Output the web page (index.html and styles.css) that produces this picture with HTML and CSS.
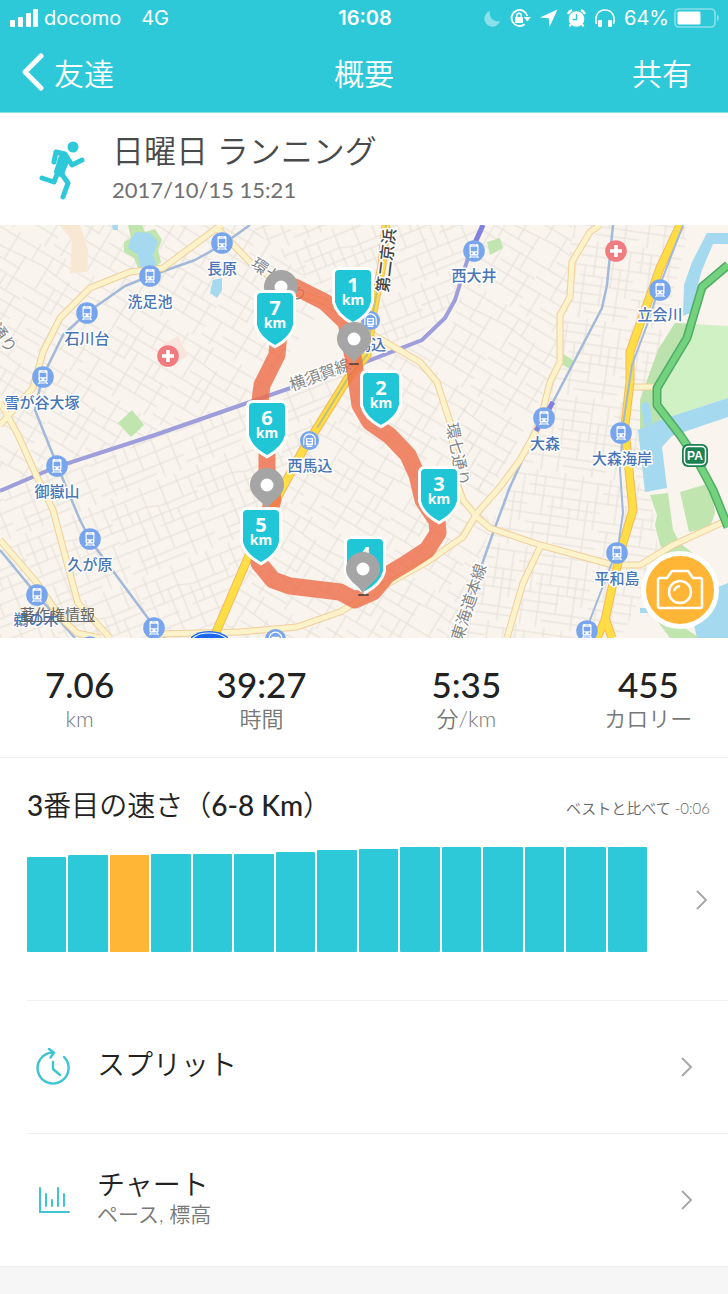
FILE: index.html
```
<!DOCTYPE html>
<html lang="ja">
<head>
  <meta charset="utf-8">
  <meta name="viewport" content="width=device-width, initial-scale=1">
  <title>概要</title>
  <link rel="stylesheet" href="styles.css">
</head>
<body>
  <header class="top">
    <div class="status">
      <div class="status-left">
        <svg width="29" height="18" viewBox="0 0 29 18" fill="#fff">
          <rect x="0" y="11" width="5" height="7" rx="1"/>
          <rect x="8" y="8" width="5" height="10" rx="1"/>
          <rect x="16" y="4" width="5" height="14" rx="1"/>
          <rect x="23" y="0" width="5" height="18" rx="1"/>
        </svg>
        <span class="carrier">docomo</span>
        <span>4G</span>
      </div>
      <time class="clock">16:08</time>
      <div class="status-right">
        <svg class="moon" width="17" height="17" viewBox="0 0 17 17"><path d="M6 1A8 8 0 1 0 16 11A8 8 0 0 1 6 1Z" fill="#8be0e9"/></svg>
        <svg class="lock" width="21" height="20" viewBox="0 0 21 20">
          <path d="M14.600 16.200A8 8 0 1 1 17.300 8" fill="none" stroke="#fff" stroke-width="1.800"/>
          <path d="M13.800 9H20.800L17.300 13.500Z" fill="#fff"/>
          <rect x="5" y="9" width="8" height="6" rx="1" fill="#fff"/>
          <path d="M6.700 9V7.500A2.300 2.300 0 0 1 11.300 7.500V9" fill="none" stroke="#fff" stroke-width="1.500"/>
        </svg>
        <svg class="arrow" width="18" height="18" viewBox="0 0 18 18"><path d="M17.500 .5L0 8.500L8.800 9.200L9.500 18Z" fill="#fff"/></svg>
        <svg class="alarm" width="19" height="19" viewBox="0 0 19 19">
          <circle cx="9.500" cy="10" r="7.800" fill="#fff"/>
          <path d="M1 5A9 9 0 0 1 5 1M18 5A9 9 0 0 0 14 1" stroke="#fff" stroke-width="2.400" fill="none"/>
          <path d="M4 15L2.500 17.500M15 15L16.500 17.500" stroke="#fff" stroke-width="2"/>
          <path d="M9.500 5V10.500H5.500" stroke="#2dc9d9" stroke-width="1.300" fill="none"/>
        </svg>
        <svg class="phones" width="20" height="19" viewBox="0 0 20 19">
          <path d="M1.500 15C-1 6 4 1 10 1S21 6 18.500 15" fill="none" stroke="#fff" stroke-width="1.600"/>
          <rect x="3" y="11" width="4" height="7" rx="1" fill="#fff"/>
          <rect x="13" y="11" width="4" height="7" rx="1" fill="#fff"/>
        </svg>
        <span>64%</span>
        <svg class="battery" width="46" height="20" viewBox="0 0 46 20">
          <rect x="1" y="1" width="40" height="18" rx="4" fill="none" stroke="#8be0e9" stroke-width="1.600"/>
          <rect x="3.500" y="3.500" width="23" height="13" rx="1.500" fill="#fff"/>
          <path d="M43 6.500Q47 10 43 13.500Z" fill="#8be0e9"/>
        </svg>
      </div>
    </div>
    <nav class="nav">
      <a class="back" href="#">
        <svg width="22" height="38" viewBox="0 0 22 38"><path d="M19 3L3 19L19 35" fill="none" stroke="#fff" stroke-width="5" stroke-linecap="round" stroke-linejoin="round"/></svg>
        友達
      </a>
      <h1>概要</h1>
      <a class="share" href="#">共有</a>
    </nav>
  </header>

  <section class="activity">
    <svg width="47" height="60" viewBox="0 0 47 60" fill="none" stroke="#2dc9d9" stroke-linecap="round" stroke-linejoin="round">
      <circle cx="34" cy="7" r="5.500" fill="#2dc9d9" stroke="none"/>
      <path d="M15 22L17 12L26 14L33 25L43 20" stroke-width="5"/>
      <path d="M23 16L28 19L22 34L18 32Z" fill="#2dc9d9" stroke-width="6"/>
      <path d="M19 32L15 42L3 38" stroke-width="5"/>
      <path d="M22 33L29 43L24 57" stroke-width="5"/>
    </svg>
    <div>
      <h2>日曜日 ランニング</h2>
      <time datetime="2017-10-15T15:21">2017/10/15 15:21</time>
    </div>
  </section>

  <section class="map">
    <svg class="map-svg" viewBox="0 225 728 413">
      <defs>
        <pattern id="streetsA" width="92" height="84" patternUnits="userSpaceOnUse" patternTransform="rotate(-22)">
          <path d="M0 8H92M0 21H38L52 25H92M0 33H92M0 46H30M44 44H92M0 57H92M12 70H92M0 78H60M8 0V46M19 8V33M27 21V84M38 0V57M49 25V70M58 0V44M67 33V84M76 0V25M84 44V84M88 8V33M14 57V84"/>
        </pattern>
        <pattern id="streetsB" width="86" height="94" patternUnits="userSpaceOnUse" patternTransform="rotate(31)">
          <path d="M0 6H86M0 18L40 22L86 18M10 32H70M0 43H86M0 55H34M46 58H86M0 68H86M20 80H86M0 88H40M7 6V43M18 0V20M24 32V68M33 18V55M42 43V94M51 0V32M60 43V80M68 18V58M75 0V18M79 58V94M12 68V94"/>
        </pattern>
        <pattern id="streetsC" width="74" height="78" patternUnits="userSpaceOnUse" patternTransform="rotate(8)">
          <path d="M0 6H74M0 15H50M0 25H74M20 35H74M0 44H74M0 53H45M0 63H74M30 71H74M6 0V25M15 6V44M25 25V78M34 0V35M43 35V63M52 0V44M60 25V78M68 6V53M9 53V78"/>
        </pattern>
        <symbol id="station" viewBox="0 0 22 22">
          <circle cx="11" cy="11" r="10.800" fill="#78a6ee"/>
          <path d="M8 4H14Q15.500 4 15.500 5.500V14Q15.500 15.500 14 15.500H8Q6.500 15.500 6.500 14V5.500Q6.500 4 8 4Z" fill="#fff"/>
          <path d="M8 7H14V11H8ZM9 5H13" fill="#78a6ee" stroke="#78a6ee" stroke-width=".6"/>
          <circle cx="8.700" cy="13.300" r="1" fill="#78a6ee"/><circle cx="13.300" cy="13.300" r="1" fill="#78a6ee"/>
          <path d="M8 15.500L6.500 18M14 15.500L15.500 18M7.500 17H14.500" stroke="#fff" stroke-width="1.200"/>
        </symbol>
        <symbol id="metro" viewBox="0 0 22 22">
          <circle cx="11" cy="11" r="10" fill="#78a6ee"/>
          <path d="M5 16V10A6 6 0 0 1 17 10V16" fill="none" stroke="#fff" stroke-width="1.200"/>
          <path d="M8 9H14V15H8ZM8 17H14" fill="none" stroke="#fff" stroke-width="1.500"/>
          <path d="M8 12H14" stroke="#fff"/>
        </symbol>
        <symbol id="hospital" viewBox="0 0 22 22">
          <circle cx="11" cy="11" r="10.800" fill="#f07c80"/>
          <path d="M11 5V17M5 11H17" stroke="#fff" stroke-width="3.600"/>
        </symbol>
        <path id="flag" d="M-14 2H14Q18 2 18 6V34Q15 46 0 54Q-15 46 -18 34V6Q-18 2 -14 2Z"/>
        <g id="pin">
          <path d="M0 25C-3 16 -17 12 -17 0A17 17 0 0 1 17 0C17 12 3 16 0 25Z" fill="#a5a5a5"/>
          <circle r="6.500" fill="#fff"/>
        </g>
      </defs>

      <rect y="225" width="728" height="413" fill="#f9f4ed"/>

      <!-- small streets -->
      <path d="M0 225H250L330 300L250 402L0 491Z" fill="url(#streetsB)"/>
      <path d="M0 491L250 402L360 364L300 450L247 560L217 638H0Z" fill="url(#streetsA)"/>
      <path d="M250 225H483L445 318L360 364L330 300Z" fill="url(#streetsA)"/>
      <path d="M360 364L450 330L490 528L455 638H217L247 560L300 450Z" fill="url(#streetsB)"/>
      <path d="M483 225H572L570 297L560 362L480 513L450 330Z" fill="url(#streetsB)"/>
      <path d="M572 225H690L640 430L660 560L620 638H455L490 528L560 362Z" fill="url(#streetsC)"/>

      <!-- parks, districts and water -->
      <path d="M60 225H80L88 250L87 272L70 273L72 240Z" fill="#f7e7d3"/>
      <path d="M162 345L178 336L188 356L172 365Z" fill="#fae4de"/>
      <g fill="#c0e5ae">
        <path d="M128 225H142L145 232L155 229L162 240L158 250L161 262L150 272L138 268L134 258L124 252V242L131 238Z"/>
        <path d="M132 410L144 425L131 437L118 423Z"/>
        <path d="M562 353L574 361L570 369L561 364Z"/>
        <path d="M487 242L500 238L503 248L490 255Z"/>
        <path d="M650 495L668 493L673 530L680 543L694 554L670 562L660 545L655 525L657 515Z"/>
        <path d="M680 492L710 483L715 513L710 527L689 532Z"/>
        <path d="M655 618L680 625L700 638H670Z"/>
      </g>
      <path d="M675 323L728 326V398L660 420L640 432V400L658 350Z" fill="#d0f1c3"/>
      <path d="M675 323L693 324L657 390L663 418L640 432V400L658 350Z" fill="#bce2ad"/>
      <g fill="#a4d9f0">
        <path d="M130 240L136 232L150 233L158 242L153 255L158 268L140 270L138 255L128 248Z"/>
        <path d="M213 280L222 278V290L217 298L210 293Z"/>
        <path d="M112 225H118V230H113Z"/>
        <path d="M707 233H728V244H713L702 270L690 313L683 316L684 285L692 262Z"/>
        <path d="M638 430L660 420L728 398V417L672 436L662 447L667 488L645 492Z"/>
        <path d="M641 405Q646 398 650 405L652 422L645 427Z"/>
        <path d="M718 587L728 583V638H697L694 625L710 610Z"/>
        <path d="M640 608H650V613H640Z"/>
      </g>

      <!-- railways -->
      <g fill="none" stroke="#a3b9da" stroke-width="2.500" stroke-linejoin="round">
        <path d="M250 225L222 245L195 260L150 276L125 286L88 312L63 335L42 378L35 410L57 465L80 520L90 540L153 625L165 638"/>
        <path d="M0 550L37 595L75 638"/>
        <path d="M613 225L607 285L602 308L553 402L537 428L510 487L493 533L480 570L468 600L455 638"/>
      </g>
      <path d="M0 491L56 467L155 435L250 402L360 364L422 340L445 318L455 300L468 258L483 225" fill="none" stroke="#9d9edb" stroke-width="4"/>

      <!-- roads: casing first, then the fill -->
      <g fill="none" stroke-linejoin="round">
        <g stroke="#f0cf9c" stroke-width="7">
          <path d="M0 425L33 388L43 352L60 318L90 288L130 272L163 268L217 228L222 225M217 228L250 262L285 288L325 302L373 335L420 362L437 382L450 422L457 483L463 500L477 517L490 528L540 545L613 565H640L673 545L728 520"/>
          <path d="M0 402L18 435L37 477L53 510L67 563L78 603L110 638M0 540L37 583L60 617L77 633L100 638M160 634L240 632L297 627L340 612L380 588L427 562L463 537L477 513L500 487L520 460L533 437L540 422L550 382L560 362V315L570 297L572 262L590 232L600 225M540 547L523 583L507 638M632 387H657"/>
        </g>
        <g stroke="#fdf3cb" stroke-width="5">
          <path d="M0 402L18 435L37 477L53 510L67 563L78 603L110 638M0 540L37 583L60 617L77 633L100 638M160 634L240 632L297 627L340 612L380 588L427 562L463 537L477 513L500 487L520 460L533 437L540 422L550 382L560 362V315L570 297L572 262L590 232L600 225M540 547L523 583L507 638M632 387H657"/>
          <path d="M0 425L33 388L43 352L60 318L90 288L130 272L163 268L217 228L222 225M217 228L250 262L285 288L325 302L373 335L420 362L437 382L450 422L457 483L463 500L477 517L490 528L540 545L613 565H640L673 545L728 520"/>
        </g>
        <g stroke="#f2b95f" stroke-width="9">
          <path d="M680 225L660 268L630 352V382L625 425L627 450L633 510L623 543L613 583L605 620L597 638M605 618L612 638"/>
          <path d="M386 225L382 265L373 312L367 355L350 375L317 428L303 450L283 487L260 530L247 560L217 630L213 638"/>
        </g>
        <g stroke="#ffdd45" stroke-width="7">
          <path d="M680 225L660 268L630 352V382L625 425L627 450L633 510L623 543L613 583L605 620L597 638M605 618L612 638"/>
          <path d="M386 225L382 265L373 312L367 355L350 375L317 428L303 450L283 487L260 530L247 560L217 630L213 638"/>
        </g>
        <path d="M683 225L660 285L647 325L632 365L623 425L620 470L623 513L618 547L590 620L583 638" stroke="#a3b9da" stroke-width="2"/>
        <path d="M386 225L382 265L373 312L367 355L350 375L317 428" stroke="#c3bf83" stroke-width="2"/>
        <path d="M728 265L702 287L687 338L657 388V405L680 435L697 460L713 490L728 527" stroke="#51ab67" stroke-width="9"/>
        <path d="M728 265L702 287L687 338L657 388V405L680 435L697 460L713 490L728 527" stroke="#72d27e" stroke-width="6"/>
      </g>
      <path d="M553 402L549 409M540 424L536 431M474 245L483 225" stroke="#8080e0" stroke-width="5"/>

      <!-- road and line names -->
      <g class="road-name">
        <text x="250" y="266" transform="rotate(36 250 266)">環七通り</text>
        <text x="292" y="391" transform="rotate(-20 292 391)">横須賀線</text>
        <text x="446" y="424" transform="rotate(79 446 424)">環七通り</text>
        <text x="462" y="642" transform="rotate(-72 462 642)">東海道本線</text>
        <text x="-10" y="328" transform="rotate(55 -10 328)">通り</text>
        <text class="route-name" x="388" y="293" transform="rotate(-83 388 293)">第二京浜</text>
      </g>

      <!-- stations -->
      <g>
        <use href="#station" x="211" y="232" width="22" height="22"/>
        <use href="#station" x="139" y="265" width="22" height="22"/>
        <use href="#station" x="76" y="302" width="22" height="22"/>
        <use href="#station" x="32" y="366" width="22" height="22"/>
        <use href="#station" x="46" y="455" width="22" height="22"/>
        <use href="#station" x="79" y="528" width="22" height="22"/>
        <use href="#station" x="26" y="584" width="22" height="22"/>
        <use href="#station" x="143" y="617" width="22" height="22"/>
        <use href="#station" x="79" y="636" width="22" height="22"/>
        <use href="#station" x="463" y="240" width="22" height="22"/>
        <use href="#station" x="649" y="279" width="22" height="22"/>
        <use href="#station" x="533" y="407" width="22" height="22"/>
        <use href="#station" x="610" y="422" width="22" height="22"/>
        <use href="#station" x="606" y="542" width="22" height="22"/>
        <use href="#station" x="576" y="620" width="22" height="22"/>
        <use href="#metro" x="299" y="430" width="21" height="21"/>
        <use href="#metro" x="360" y="310" width="21" height="21"/>
        <use href="#metro" x="264" y="628" width="23" height="23"/>
        <use href="#hospital" x="157" y="345" width="22" height="22"/>
        <use href="#hospital" x="605" y="240" width="22" height="22"/>
      </g>
      <path d="M191 645V637Q197 631 209 631T228 637V645Z" fill="#1b67ee"/>
      <path d="M193 642V638Q198 633 209 633T226 638V642" fill="none" stroke="#fff" stroke-width="1.200"/>
      <g class="station-name">
        <text x="222" y="274">長原</text>
        <text x="150" y="307">洗足池</text>
        <text x="87" y="344">石川台</text>
        <text x="42" y="408">雪が谷大塚</text>
        <text x="57" y="497">御嶽山</text>
        <text x="90" y="570">久が原</text>
        <text x="36" y="625">鵜の木</text>
        <text x="474" y="281">西大井</text>
        <text x="660" y="320">立会川</text>
        <text x="545" y="449">大森</text>
        <text x="622" y="464">大森海岸</text>
        <text x="617" y="584">平和島</text>
        <text x="310" y="471">西馬込</text>
        <text x="371" y="350">馬込</text>
      </g>
      <rect x="682" y="444" width="26" height="23" rx="6" fill="#1c8150"/>
      <rect x="684.500" y="446.500" width="21" height="18" rx="4" fill="none" stroke="#fff" stroke-width="1.500"/>
      <text class="parking" x="695" y="460">PA</text>

      <!-- running track -->
      <path d="M283 287L295 287L325 302L346 322L354 362L357 385L360 405L370 422L390 436L408 455L417 475L423 500L437 521L438 533L427 550L407 563L387 575L373 592L355 600L340 592L290 586L273 580L259 563L262 535L273 500L267 470V440L259 410L262 385L277 355L280 320V290" fill="none" stroke="#ee6c47" stroke-opacity=".8" stroke-width="17" stroke-linejoin="round" stroke-linecap="round"/>
      <path d="M359 595H368M350 364H358" stroke="#6a4a40" stroke-width="2" stroke-linecap="round"/>

      <!-- kilometre flags and pins -->
      <use href="#pin" x="281" y="287"/>
      <g class="flag" transform="translate(353 268)"><use href="#flag"/><text y="24">1</text><text class="unit" y="37">km</text></g>
      <g class="flag" transform="translate(275 291)"><use href="#flag"/><text y="24">7</text><text class="unit" y="37">km</text></g>
      <g class="flag" transform="translate(381 371)"><use href="#flag"/><text y="24">2</text><text class="unit" y="37">km</text></g>
      <g class="flag" transform="translate(267 401)"><use href="#flag"/><text y="24">6</text><text class="unit" y="37">km</text></g>
      <g class="flag" transform="translate(439 467)"><use href="#flag"/><text y="24">3</text><text class="unit" y="37">km</text></g>
      <g class="flag" transform="translate(365 537)"><use href="#flag"/><text y="24">4</text></g>
      <use href="#pin" x="354" y="339"/>
      <use href="#pin" x="267" y="485"/>
      <use href="#pin" x="363" y="569"/>
      <g class="flag" transform="translate(261 508)"><use href="#flag"/><text y="24">5</text><text class="unit" y="37">km</text></g>
    </svg>
    <a class="legal" href="#">著作権情報</a>
    <button class="camera" type="button" aria-label="カメラ">
      <svg width="48" height="42" viewBox="0 0 48 42" fill="none" stroke="#fff" stroke-width="2.500" stroke-linejoin="round">
        <path d="M4 9H11L16 2H32L37 9H44Q46 9 46 11V37Q46 39 44 39H4Q2 39 2 37V11Q2 9 4 9Z"/>
        <circle cx="24" cy="23" r="11"/>
        <path d="M18 22Q19 18 24 17"/>
      </svg>
    </button>
  </section>

  <section class="stats">
    <div class="stat"><strong>7.06</strong><span>km</span></div>
    <div class="stat"><strong>39:27</strong><span>時間</span></div>
    <div class="stat"><strong>5:35</strong><span>分/km</span></div>
    <div class="stat"><strong>455</strong><span>カロリー</span></div>
  </section>

  <section class="pace">
    <div class="pace-head">
      <h3><b>3</b>番目の速さ（<b>6-8 Km</b>）</h3>
      <span>ベストと比べて -0:06</span>
    </div>
    <a class="pace-body" href="#" aria-label="速さの詳細">
      <div class="bars">
        <div class="bar" style="height: 95px"></div>
        <div class="bar" style="height: 97px"></div>
        <div class="bar current" style="height: 97px"></div>
        <div class="bar" style="height: 98px"></div>
        <div class="bar" style="height: 98px"></div>
        <div class="bar" style="height: 98px"></div>
        <div class="bar" style="height: 100px"></div>
        <div class="bar" style="height: 102px"></div>
        <div class="bar" style="height: 103px"></div>
        <div class="bar" style="height: 105px"></div>
        <div class="bar" style="height: 105px"></div>
        <div class="bar" style="height: 105px"></div>
        <div class="bar" style="height: 105px"></div>
        <div class="bar" style="height: 105px"></div>
        <div class="bar" style="height: 105px"></div>
      </div>
      <svg class="chevron" width="13" height="22" viewBox="0 0 13 22"><path d="M2 2L11 11L2 20"/></svg>
    </a>
  </section>

  <a class="row" href="#">
    <svg class="row-icon" width="36" height="38" viewBox="0 0 36 38" fill="none" stroke="#3fc4d3" stroke-width="2.400" stroke-linecap="round" stroke-linejoin="round">
      <path d="M29 9A15.500 15.500 0 1 1 18 4.500"/>
      <path d="M14 1L19 4.500L15.500 9.500"/>
      <path d="M18 14V21L25 27"/>
    </svg>
    <div class="row-text"><h4>スプリット</h4></div>
    <svg class="chevron" width="13" height="22" viewBox="0 0 13 22"><path d="M2 2L11 11L2 20"/></svg>
  </a>
  <a class="row" href="#">
    <svg class="row-icon" width="36" height="38" viewBox="0 0 36 38" fill="none" stroke="#3fc4d3" stroke-width="2" stroke-linecap="round">
      <path d="M5 7V31H34M11 13V25M17 19V25M23 7V25M29 13V25"/>
    </svg>
    <div class="row-text"><h4>チャート</h4><p>ペース, 標高</p></div>
    <svg class="chevron" width="13" height="22" viewBox="0 0 13 22"><path d="M2 2L11 11L2 20"/></svg>
  </a>
  <div class="footer"></div>
</body>
</html>
```
FILE: styles.css
```
* {
  box-sizing: border-box;
}
body {
  margin: 0;
  min-height: 100vh;
  display: flex;
  flex-direction: column;
  font-family: Lato, "Noto Sans CJK JP", sans-serif;
  background: #fff;
  color: #222;
}
h1, h2, h3, h4, p {
  margin: 0;
  font-weight: 350;
}
a {
  color: inherit;
  text-decoration: none;
}
svg {
  display: block;
  flex: none;
}

/* status bar and navigation */
.top {
  background: #2dc9d9;
  color: #fff;
  border-bottom: 1px solid #8be0e9;
}
.status {
  display: grid;
  grid-template-columns: 1fr auto 1fr;
  align-items: center;
  height: 36px;
  padding: 0 8px 0 10px;
  font-family: Inter, sans-serif;
  font-size: 20px;
}
.status-left, .status-right {
  display: flex;
  align-items: center;
}
.carrier {
  margin: 0 20px 0 5px;
}
.clock {
  font-weight: 600;
}
.status-right {
  justify-content: flex-end;
  gap: 9px;
}
.battery {
  margin-left: -4px;
}
.nav {
  display: grid;
  grid-template-columns: 1fr auto 1fr;
  align-items: center;
  height: 76px;
  padding: 0 36px 4px 22px;
  font-size: 30px;
  font-weight: 350;
}
.nav h1 {
  padding-left: 14px;
  font-size: 30px;
}
.back {
  display: flex;
  align-items: center;
  gap: 10px;
}
.share {
  text-align: right;
}

/* activity title */
.activity {
  display: flex;
  align-items: center;
  gap: 26px;
  height: 112px;
  padding: 2px 39px 0;
}
.activity h2 {
  margin-bottom: 4px;
  font-size: 32px;
  line-height: 36px;
  color: #4a4a4a;
}
.activity time {
  display: block;
  font-size: 22px;
  line-height: 34px;
  color: #707070;
}

/* map */
.map {
  position: relative;
}
.map-svg {
  width: 100%;
  height: auto;
  font-family: "Noto Sans CJK JP", sans-serif;
}
.map-svg pattern path {
  fill: none;
  stroke: #e4dfd8;
  stroke-width: 1;
}
.station-name, .road-name {
  font-size: 15px;
  font-weight: 500;
  fill: #4875b5;
  stroke: #fff;
  stroke-width: 3px;
  stroke-linejoin: round;
  paint-order: stroke;
}
.station-name {
  text-anchor: middle;
}
.road-name {
  font-size: 16px;
  font-weight: 400;
  fill: #858585;
}
.route-name {
  font-weight: 500;
  fill: #444;
}
.parking {
  font: bold 12px "Liberation Sans", sans-serif;
  fill: #fff;
  text-anchor: middle;
}
.flag use {
  fill: #20c6d6;
  stroke: #fff;
  stroke-width: 6px;
  paint-order: stroke;
}
.flag text {
  font-family: "Noto Sans", sans-serif;
  font-size: 20px;
  font-weight: 700;
  fill: #fff;
  text-anchor: middle;
}
.flag .unit {
  font-size: 14px;
}
.legal {
  position: absolute;
  left: 20px;
  bottom: 14px;
  font-size: 15px;
  line-height: 20px;
  color: #666;
  text-decoration: underline;
}
.camera {
  position: absolute;
  right: 9px;
  bottom: 9px;
  display: flex;
  align-items: center;
  justify-content: center;
  width: 78px;
  height: 78px;
  padding: 0;
  border: 5px solid #fff;
  border-radius: 50%;
  background: #ffb637;
}

/* totals */
.stats {
  display: grid;
  grid-template-columns: 7fr 9fr 9fr 7fr;
  height: 120px;
  padding-top: 25px;
  border-bottom: 1px solid #f2f2f2;
}
.stat {
  text-align: center;
}
.stat strong {
  display: block;
  font-size: 35px;
  line-height: 42px;
  font-weight: 500;
}
.stat span {
  display: block;
  font-size: 22px;
  line-height: 28px;
  font-weight: 350;
  color: #777;
}

/* pace chart */
.pace {
  height: 242px;
  padding: 27px 18px 0 27px;
}
.pace-head {
  display: flex;
  justify-content: space-between;
  align-items: center;
}
.pace-head h3 {
  font-size: 28px;
  line-height: 40px;
}
.pace-head b {
  font-weight: 500;
}
.pace-head span {
  padding-top: 4px;
  font-size: 15px;
  font-weight: 350;
  color: #666;
}
.pace-body {
  display: flex;
  align-items: center;
  gap: 48px;
  margin-top: 22px;
  padding-right: 2px;
}
.bars {
  flex: 1;
  display: flex;
  align-items: flex-end;
  gap: 2px;
}
.bar {
  flex: 1;
  border-radius: 1px;
  background: #2dc9d9;
}
.bar.current {
  background: #ffb637;
}
.chevron path {
  fill: none;
  stroke: #a8a8a8;
  stroke-width: 2;
}

/* links to detail pages */
.row {
  display: flex;
  align-items: center;
  height: 133px;
  margin-left: 27px;
  padding: 0 35px 0 8px;
  border-top: 1px solid #efefef;
}
.row-text {
  flex: 1;
  padding: 0 0 6px 26px;
}
.row h4 {
  font-size: 28px;
  line-height: 34px;
}
.row p {
  font-size: 21px;
  line-height: 26px;
  color: #777;
}
.footer {
  flex: 1;
  min-height: 27px;
  background: #f6f6f6;
  border-top: 1px solid #efefef;
}
```
